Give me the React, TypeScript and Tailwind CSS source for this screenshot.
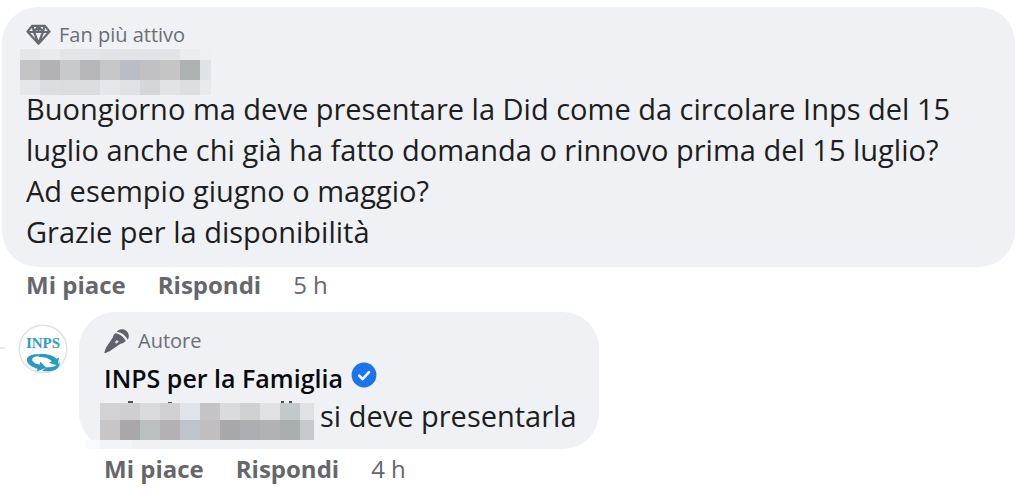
import type { ReactNode } from 'react';

type MosaicProps = { className: string; cells: string[] };

/** Pixelated cover for a person's name; column and row tracks come from className. */
function Mosaic({ className, cells }: MosaicProps) {
  return (
    <div aria-hidden="true" className={`grid shrink-0 ${className}`}>
      {cells.map((color, i) => (
        <span key={i} style={{ backgroundColor: color }} />
      ))}
    </div>
  );
}

const fanName = [
  '#e4e6e9', '#e9ebef', '#e3e5e8', '#e3e5e8', '#e2e3e6', '#e2e4e7', '#e3e4e7', '#e3e4e7', '#ebedf1', '#eef0f3',
  '#c5c4c5', '#b2b2b4', '#c8c9cb', '#b7b7b9', '#c6c7c9', '#b9bec6', '#c1c1c3', '#c5c5c5', '#adb2b3', '#dfe3e8',
  '#e6e7ea', '#dcdde0', '#dadce0', '#dadce0', '#e6e7eb', '#e0e1e5', '#d5d6da', '#e2e3e6', '#dddee1', '#e8eaee',
];

const mentionName = [
  '#d3d3d5', '#cfcfd1', '#dadbdf', '#d1d1d4', '#e1e4ea', '#c4c4c6', '#dadbdf', '#d0d1d3', '#dfe1e5', '#c2c9cb', '#dfe1e5',
  '#c8c5c7', '#a9a7a9', '#babfc2', '#b4b1b6', '#bfc3cb', '#c0bebf', '#a8a8aa', '#abaeb2', '#b1b2b5', '#a9aeaf', '#c5c9cd',
];

function DiamondIcon() {
  return (
    <svg viewBox="0 0 25 22" className="h-[22px] w-[25px] shrink-0" aria-hidden="true">
      <path
        d="M6.2 1.8h12.6l4.800 5.800L12.500 19.800 1.400 7.600zM1.500 8h22M6.500 1.800 8 8l4.500 11.500L17 8l1.500-6.200M8 8l4.500-5.800L17 8M12.500 2v6"
        fill="none"
        stroke="#656972"
        strokeWidth="2.2"
        strokeLinejoin="round"
      />
    </svg>
  );
}

function MicIcon() {
  return (
    <svg viewBox="0 0 26 26" className="size-[26px] shrink-0" aria-hidden="true">
      <g fill="#5f626b">
        <path d="M12.800 3.800C14 1.600 17 .5 20 1.600c3.600 1.300 5.700 5 4.500 8.600-.2.600-.5 1.100-.9 1.500-1.600-3.800-5.600-7.200-10.800-7.900z" />
        <path d="M11.300 5.300c4.700.7 8.700 3.800 10.400 7.700-1.300 1.600-3.100 2.400-5.200 2.700L5.600 23.200.9 25.200.3 24.600 2 19.800 8.800 9.400c.3-1.600 1.200-3.100 2.500-4.100z" />
      </g>
      <path d="m10.600 14.200 2.300-2.300 2 1.700-2.400 2.200z" fill="#d9dbe0" />
    </svg>
  );
}

function VerifiedIcon() {
  return (
    <svg viewBox="0 0 26 26" className="size-[26px] shrink-0" role="img" aria-label="Verificato">
      <circle cx="13" cy="13" r="12.4" fill="#1b74e9" />
      <path d="m8.200 13.600 3.400 3.500 6.400-6.900" fill="none" stroke="#fff" strokeWidth="2.600" strokeLinecap="round" strokeLinejoin="round" />
    </svg>
  );
}

function InpsLogo() {
  return (
    <svg viewBox="0 0 50 50" className="size-[50px] shrink-0" role="img" aria-label="INPS">
      <circle cx="25" cy="25" r="23.8" fill="#fff" stroke="#dfe1e4" strokeWidth="1.4" />
      <text x="25" y="24" textAnchor="middle" fontFamily="Liberation Serif, serif" fontWeight="700" fontSize="15" fill="#2f9cc4">
        INPS
      </text>
      <g fill="#2b9ac3">
        <path d="M22 30.400C14 29.600 8.600 32 8.800 36c.2 4 5 7.300 10.800 8.800l-1 2.700 9.800-3.700-5.900-6-1 2.800c-4.500-1-7.300-3-7.300-4.900 0-2.300 3.300-3.600 7.800-3.300z" />
        <path d="M21.500 30c7.500-.4 14.500 1.500 17 4.800l2.600-1.200-1.500 7.900-8.800-2.800 2.900-1.500c-2.300-2.800-7.500-4.300-13-4.200z" />
        <path d="M28.500 43.300c4.500 0 8-.9 10.300-2.400 1.800-1.200 2.400-2.400 2.300-4 1.500 4-.6 7.800-5 9.400-3.500 1.300-8.500 1.300-12 .4z" />
      </g>
    </svg>
  );
}

function Badge({ icon, children }: { icon: ReactNode; children: ReactNode }) {
  return (
    <div className="flex h-7 items-center gap-2 text-[20px] leading-7 font-medium text-[#6b6e74]">
      {icon}
      <span>{children}</span>
    </div>
  );
}

function Actions({ time, className }: { time: string; className: string }) {
  return (
    <div className={`flex items-center gap-8 text-[24px] leading-8 text-[#65676b] ${className}`}>
      <button type="button" className="font-bold">Mi piace</button>
      <button type="button" className="font-bold">Rispondi</button>
      <span>{time}</span>
    </div>
  );
}

export default function App() {
  return (
    <main className="min-h-screen bg-white pt-[7px] pr-[9px] pl-0.5 font-['Open_Sans','Noto_Sans',sans-serif] text-[#1c1e21]">
      <article>
        <div className="rounded-[36px] bg-[#eff1f5] pt-3.5 pb-[15px] pl-6">
          <Badge icon={<DiamondIcon />}>Fan più attivo</Badge>
          <Mosaic
            className="-ml-1.5 w-fit grid-cols-[repeat(9,20px)_11px] grid-rows-[11px_20px_15px]"
            cells={fanName}
          />
          <p className="-mt-[7px] text-[29px] leading-[41px]">
            Buongiorno ma deve presentare la Did come da circolare Inps del 15
            <br />
            luglio anche chi già ha fatto domanda o rinnovo prima del 15 luglio?
            <br />
            Ad esempio giugno o maggio?
            <br />
            Grazie per la disponibilità
          </p>
        </div>
        <Actions time="5 h" className="pt-0.5 pl-6" />
      </article>

      <article className="mt-[11px] flex items-start">
        <span className="-ml-0.5 mt-[35px] h-0.5 w-[5px] bg-[#e8e9eb]" />
        <a href="#inps" className="mt-3 ml-[13px]">
          <InpsLogo />
        </a>
        <div className="ml-[11px]">
          <div className="relative w-fit rounded-[36px] bg-[#eff1f5] pt-[15px] pr-[22px] pb-3 pl-[25px]">
            <span aria-hidden="true" className="absolute bottom-0 left-1.5 h-[9px] w-[15px] bg-[#f9fafc]" />
            <span aria-hidden="true" className="absolute bottom-0 left-[21px] h-[9px] w-8 bg-[#f2f4f8]" />
            <Badge icon={<MicIcon />}>Autore</Badge>
            <div className="mt-[7px] flex h-8 items-start gap-2">
              <a href="#inps" className="text-[25px] leading-8 font-semibold text-[#080a0d]">INPS per la Famiglia</a>
              <VerifiedIcon />
            </div>
            <div className="-ml-1 flex items-start gap-1.5">
              <div className="relative mt-[9px] -mb-[3px]">
                <svg viewBox="0 0 214 3" className="absolute -top-[3px] left-0 h-[3px] w-full" fill="#4b4e53" aria-hidden="true">
                  <path d="M28 1h5v2h-5zM68 2h4v1h-4zM181 1h3v2h-3zM189 1h3v2h-3z" />
                </svg>
                <Mosaic
                  className="grid-cols-[repeat(10,20px)_14px] grid-rows-[17px_20px]"
                  cells={mentionName}
                />
              </div>
              <p className="text-[29px] leading-[43px]">si deve presentarla</p>
            </div>
          </div>
          <Actions time="4 h" className="pt-1 pl-[25px]" />
        </div>
      </article>
    </main>
  );
}
